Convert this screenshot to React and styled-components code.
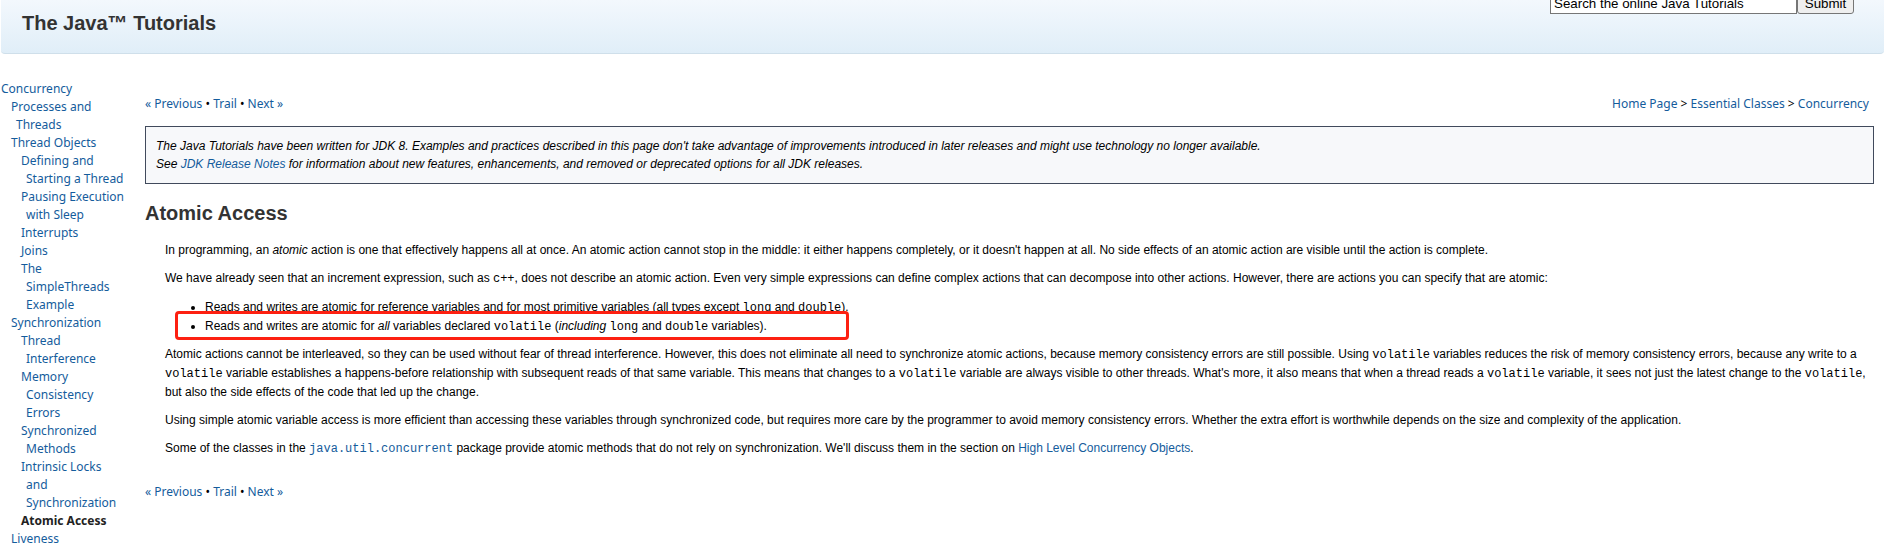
import styled, { createGlobalStyle } from "styled-components";

const lessons = [
    { level: 0, title: "Concurrency" },
    { level: 1, title: "Processes and\nThreads" },
    { level: 1, title: "Thread Objects" },
    { level: 2, title: "Defining and\nStarting a Thread" },
    { level: 2, title: "Pausing Execution\nwith Sleep" },
    { level: 2, title: "Interrupts" },
    { level: 2, title: "Joins" },
    { level: 2, title: "The\nSimpleThreads\nExample" },
    { level: 1, title: "Synchronization" },
    { level: 2, title: "Thread\nInterference" },
    { level: 2, title: "Memory\nConsistency\nErrors" },
    { level: 2, title: "Synchronized\nMethods" },
    { level: 2, title: "Intrinsic Locks\nand\nSynchronization" },
    { level: 2, title: "Atomic Access", current: true },
    { level: 1, title: "Liveness" },
];

function PageLinks() {
    return (
        <nav>
            <a href="#previous">« Previous</a> • <a href="#trail">Trail</a> • <a href="#next">Next »</a>
        </nav>
    );
}

function Header() {
    return (
        <Banner>
            <SiteTitle>The Java™ Tutorials</SiteTitle>
            <SearchForm onSubmit={(e) => e.preventDefault()}>
                <input type="text" aria-label="Search" defaultValue="Search the online Java Tutorials" />
                <button type="submit">Submit</button>
            </SearchForm>
        </Banner>
    );
}

function Sidebar() {
    return (
        <LeftBar>
            {lessons.map(({ level, title, current }) => (
                <Lesson key={title} $level={level}>
                    {current ? <strong>{title}</strong> : <a href="#lesson">{title}</a>}
                </Lesson>
            ))}
        </LeftBar>
    );
}

function App() {
    return (
        <>
            <GlobalStyle />
            <Header />
            <Columns>
                <Sidebar />
                <Main>
                    <NavRow>
                        <PageLinks />
                        <nav>
                            <a href="#home">Home Page</a> &gt; <a href="#essential">Essential Classes</a> &gt; <a href="#concurrency">Concurrency</a>
                        </nav>
                    </NavRow>
                    <Notice>
                        The Java Tutorials have been written for JDK 8. Examples and practices described in this page don't take advantage of improvements introduced in later releases and might use technology no longer available.
                        <br />
                        See <a href="#notes">JDK Release Notes</a> for information about new features, enhancements, and removed or deprecated options for all JDK releases.
                    </Notice>
                    <PageTitle>Atomic Access</PageTitle>
                    <Content>
                        <p>
                            In programming, an <em>atomic</em> action is one that effectively happens all at once. An atomic action cannot stop in the middle: it either happens completely, or it doesn't happen at all. No side effects of an atomic action are visible until the action is complete.
                        </p>
                        <p>
                            We have already seen that an increment expression, such as <code>c++</code>, does not describe an atomic action. Even very simple expressions can define complex actions that can decompose into other actions. However, there are actions you can specify that are atomic:
                        </p>
                        <ul>
                            <li>
                                Reads and writes are atomic for reference variables and for most primitive variables (all types except <code>long</code> and <code>double</code>).
                            </li>
                            <MarkedItem>
                                Reads and writes are atomic for <em>all</em> variables declared <code>volatile</code> (<em>including</em> <code>long</code> and <code>double</code> variables).
                            </MarkedItem>
                        </ul>
                        <p>
                            Atomic actions cannot be interleaved, so they can be used without fear of thread interference. However, this does not eliminate all need to synchronize atomic actions, because memory consistency errors are still possible. Using <code>volatile</code> variables reduces the risk of memory consistency errors, because any write to a <code>volatile</code> variable establishes a happens-before relationship with subsequent reads of that same variable. This means that changes to a <code>volatile</code> variable are always visible to other threads. What's more, it also means that when a thread reads a <code>volatile</code> variable, it sees not just the latest change to the <code>volatile</code>, but also the side effects of the code that led up the change.
                        </p>
                        <p>
                            Using simple atomic variable access is more efficient than accessing these variables through synchronized code, but requires more care by the programmer to avoid memory consistency errors. Whether the extra effort is worthwhile depends on the size and complexity of the application.
                        </p>
                        <p>
                            Some of the classes in the <a href="#juc"><code>java.util.concurrent</code></a> package provide atomic methods that do not rely on synchronization. We'll discuss them in the section on <a href="#highlevel">High Level Concurrency Objects</a>.
                        </p>
                    </Content>
                    <NavRow>
                        <PageLinks />
                    </NavRow>
                </Main>
            </Columns>
        </>
    );
}

const GlobalStyle = createGlobalStyle`
    body {
        margin: 0;
        background-color: #fff;
        color: #000;
        font-family: "Liberation Sans", Arial, sans-serif;
        font-size: 12px;
        line-height: 18px;
    }

    a {
        color: #145c9c;
        text-decoration: none;
    }

    code {
        font-family: "Liberation Mono", "Courier New", monospace;
        font-size: 12px;
    }
`;

const Banner = styled.header`
    display: flex;
    justify-content: space-between;
    align-items: flex-start;
    height: 53px;
    margin: 0 5px 0 1px;
    padding: 0 30px 0 21px;
    border-bottom: 1px solid #cfdfea;
    border-radius: 0 0 4px 4px;
    background: linear-gradient(#f3f8fd, #e0eef8);
`;

const SiteTitle = styled.h1`
    margin: 11px 0 0;
    font-size: 20px;
    line-height: 24px;
    color: #333;
`;

/* the form starts above the visible part of the banner */
const SearchForm = styled.form`
    display: flex;
    margin-top: -7px;

    input {
        box-sizing: border-box;
        width: 247px;
        height: 21px;
        padding: 1px 3px;
        border: 1px solid #767676;
    }

    button {
        box-sizing: border-box;
        width: 57px;
        height: 21px;
        padding: 0;
        border: 1px solid #767676;
        border-radius: 3px;
        background-color: #efefef;
    }
`;

const Columns = styled.div`
    display: flex;
    align-items: flex-start;
    padding: 26px 15px 0 1px;
`;

const LeftBar = styled.nav`
    flex: none;
    width: 128px;
    margin-right: 16px;
    font-family: "Noto Sans", sans-serif;
    font-size: 12px;
    color: #222;
`;

const Lesson = styled.div`
    padding-left: ${({ $level }) => $level * 10 + 5}px;
    text-indent: -5px;
    white-space: pre-line;

    a, strong {
        display: block;
    }
`;

const Main = styled.main`
    flex: 1;
    min-width: 0;
`;

const NavRow = styled.div`
    display: flex;
    justify-content: space-between;
    padding: 15px 5px 13px 0;
    font-family: "Noto Sans", sans-serif;
    font-size: 12px;
`;

const Notice = styled.div`
    padding: 10px;
    border: 1px solid #414a5c;
    background-color: #f7f8fa;
    font-style: italic;
`;

const PageTitle = styled.h2`
    margin: 17px 0 16px;
    font-size: 20px;
    line-height: 24px;
    color: #333;
`;

const Content = styled.div`
    padding-left: 20px;

    p {
        margin: 0 0 10px;
    }

    ul {
        margin: 0 0 9px;
        padding-left: 40px;
    }
`;

const MarkedItem = styled.li`
    position: relative;

    &::after {
        content: "";
        position: absolute;
        top: -6px;
        left: -30px;
        box-sizing: border-box;
        width: 674px;
        height: 29px;
        border: 3px solid #fd2011;
        border-radius: 4px;
    }
`;

export default App;
